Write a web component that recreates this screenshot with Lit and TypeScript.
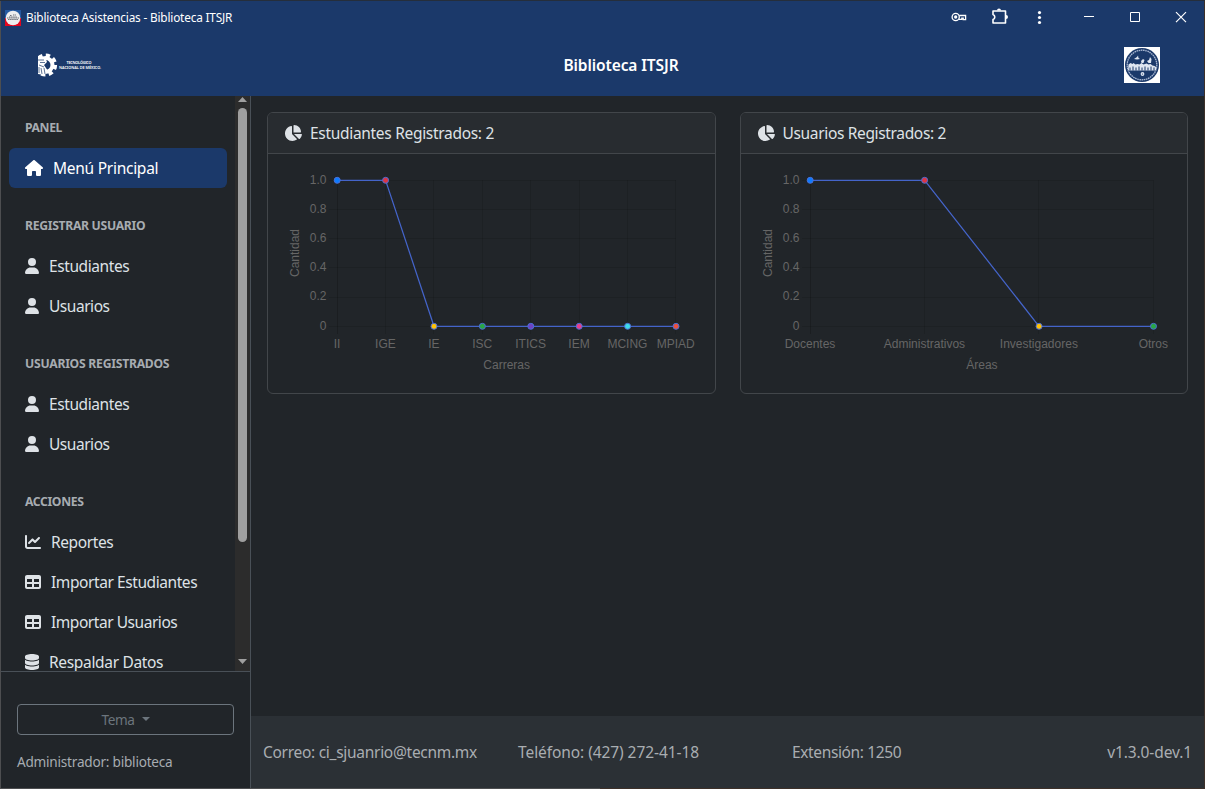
import { LitElement, html, css, svg } from "lit";
import { customElement, property } from "lit/decorators.js";

const ICONS: Record<string, { w: number; d: string }> = {
  house: { w: 576, d: "M575.8 255.5c0 18-15 32.1-32 32.1h-32l.7 160.2c0 2.7-.2 5.4-.5 8.1V472c0 22.1-17.9 40-40 40H456c-1.1 0-2.2 0-3.3-.1c-1.4 .1-2.8 .1-4.2 .1H416 392c-22.1 0-40-17.9-40-40V448 384c0-17.7-14.3-32-32-32H256c-17.7 0-32 14.3-32 32v64 24c0 22.1-17.9 40-40 40H160 128.1c-1.5 0-3-.1-4.5-.2c-1.2 .1-2.4 .2-3.6 .2H104c-22.1 0-40-17.9-40-40V360c0-.9 0-1.9 .1-2.8V287.6H32c-18 0-32-14-32-32.1c0-9 3-17 10-24L266.4 8c7-7 15-8 22-8s15 2 21 7L564.8 231.5c8 7 12 15 11 24z" },
  user: { w: 448, d: "M224 256A128 128 0 1 0 224 0a128 128 0 1 0 0 256zm-45.7 48C79.8 304 0 383.8 0 482.3C0 498.7 13.3 512 29.7 512H418.3c16.4 0 29.7-13.3 29.7-29.7C448 383.8 368.2 304 269.7 304H178.3z" },
  line: { w: 512, d: "M64 64c0-17.7-14.3-32-32-32S0 46.3 0 64V400c0 44.2 35.8 80 80 80H480c17.7 0 32-14.3 32-32s-14.3-32-32-32H80c-8.8 0-16-7.2-16-16V64zm406.6 86.6c12.5-12.5 12.5-32.8 0-45.3s-32.8-12.5-45.3 0L320 210.7l-57.4-57.4c-12.5-12.5-32.8-12.5-45.3 0l-112 112c-12.5 12.5-12.5 32.8 0 45.3s32.8 12.5 45.3 0L240 221.3l57.4 57.4c12.5 12.5 32.8 12.5 45.3 0l128-128z" },
  table: { w: 512, d: "M64 256V160H224v96H64zm0 64H224v96H64V320zm224 96V320H448v96H288zM448 256H288V160H448v96zM64 32C28.7 32 0 60.7 0 96V416c0 35.3 28.7 64 64 64H448c35.3 0 64-28.7 64-64V96c0-35.3-28.7-64-64-64H64z" },
  database: { w: 448, d: "M448 80v48c0 44.2-100.3 80-224 80S0 172.2 0 128V80C0 35.8 100.3 0 224 0S448 35.8 448 80zM393.2 214.7c20.8-7.4 39.9-16.9 54.8-28.6V288c0 44.2-100.3 80-224 80S0 332.2 0 288V186.1c14.9 11.8 34 21.2 54.8 28.6C99.7 230.7 159.5 240 224 240s124.3-9.3 169.2-25.3zM0 346.1c14.9 11.8 34 21.2 54.8 28.6C99.7 390.7 159.5 400 224 400s124.3-9.3 169.2-25.3c20.8-7.4 39.9-16.9 54.8-28.6V432c0 44.2-100.3 80-224 80S0 476.2 0 432V346.1z" },
  pie: { w: 576, d: "M304 240V16.6c0-9 7-16.6 16-16.6C443.7 0 544 100.3 544 224c0 9-7.6 16-16.6 16H304zM32 272C32 150.7 122.1 50.3 239 34.3c9.2-1.3 17 6.1 17 15.4V288L412.5 444.5c6.7 6.7 6.2 17.7-1.5 23.1C371.8 495.6 323.8 512 272 512C139.5 512 32 404.6 32 272zm526.4 16c9.3 0 16.6 7.8 15.4 17c-7.7 55.9-34.6 105.6-73.9 142.3c-6 5.6-15.4 5.2-21.2-.7L320 288H558.4z" },
};

const icon = (name: string) => {
  const { w, d } = ICONS[name];
  return html`<svg width=${w / 32} height="16" viewBox="0 0 ${w} 512" fill="currentColor"><path d=${d}></path></svg>`;
};

/* Label whose letters are spaced so that the text fills the given width in px. */
@customElement("fit-label")
class FitLabel extends LitElement {
  static styles = css`
    :host { display: inline-block; white-space: nowrap; }
  `;
  @property() text = "";
  @property({ type: Number }) width = 0;
  render() {
    return html`<span>${this.text}</span>`;
  }
  updated() {
    const span = this.renderRoot.querySelector("span") as HTMLElement;
    span.style.letterSpacing = "0px";
    const natural = span.getBoundingClientRect().width;
    span.style.letterSpacing = `${((this.width - natural) / this.text.length).toFixed(3)}px`;
  }
}

@customElement("line-chart")
class LineChart extends LitElement {
  static styles = css`
    :host { display: block; }
    svg { display: block; }
    text { font: 12px "Liberation Sans", Arial, sans-serif; fill: #666; }
    .grid { stroke: #000; stroke-opacity: 0.1; }
    .zero { stroke: #000; stroke-opacity: 0.18; }
    .series { fill: none; stroke: #4464c9; stroke-width: 1.25; }
    .dot { stroke: #4b6fd6; stroke-width: 1; }
  `;
  @property({ attribute: false }) labels: string[] = [];
  @property({ attribute: false }) values: number[] = [];
  @property({ attribute: false }) colors: string[] = [];
  @property({ type: Number }) end = 408;
  @property() axis = "";
  render() {
    const x0 = 69;
    const y1 = 26;
    const h = 146;
    const n = this.labels.length - 1;
    const x = (i: number) => x0 + ((this.end - x0) * i) / n;
    const y = (v: number) => y1 + h * (1 - v) + 0.3;
    const snap = (v: number) => Math.floor(v) + 0.5;
    const ticks = ["0", "0.2", "0.4", "0.6", "0.8", "1.0"];
    return html`<svg width="446" height="239" viewBox="0 0 446 239">
      ${ticks.map((t) => svg`
        <line class="grid" x1=${x0 - 8} x2=${this.end} y1=${snap(y(+t))} y2=${snap(y(+t))}></line>
        <text x=${x0 - 10.5} y=${Math.floor(y(+t) - 0.25) + 4} text-anchor="end">${t}</text>`)}
      ${this.labels.map((l, i) => svg`
        <line class=${i ? "grid" : "zero"} x1=${snap(x(i))} x2=${snap(x(i))} y1=${y1} y2=${y1 + h + 8}></line>
        <text x=${x(i)} y="194" text-anchor="middle">${l}</text>`)}
      <polyline class="series" points=${this.values.map((v, i) => `${x(i) + 0.2},${y(v)}`).join(" ")}></polyline>
      ${this.values.map((v, i) => svg`<circle class="dot" cx=${x(i) + 0.2} cy=${y(v)} r="3" fill=${this.colors[i]}></circle>`)}
      <text x=${(x0 + this.end) / 2 + 0.3} y="215" text-anchor="middle">${this.axis}</text>
      <text transform="translate(31 99) rotate(-90)" text-anchor="middle">Cantidad</text>
    </svg>`;
  }
}

interface Entry { icon: string; text: string; width: number; active?: boolean }
const MENU: { title: string; width: number; items: Entry[] }[] = [
  { title: "PANEL", width: 37, items: [{ icon: "house", text: "Menú Principal", width: 105.3, active: true }] },
  { title: "REGISTRAR USUARIO", width: 120.3, items: [
    { icon: "user", text: "Estudiantes", width: 80.3 },
    { icon: "user", text: "Usuarios", width: 60.5 } ] },
  { title: "USUARIOS REGISTRADOS", width: 144.3, items: [
    { icon: "user", text: "Estudiantes", width: 80.3 },
    { icon: "user", text: "Usuarios", width: 60.5 } ] },
  { title: "ACCIONES", width: 58.5, items: [
    { icon: "line", text: "Reportes", width: 62.3 },
    { icon: "table", text: "Importar Estudiantes", width: 146.2 },
    { icon: "table", text: "Importar Usuarios", width: 126.3 },
    { icon: "database", text: "Respaldar Datos", width: 114.2 } ] },
];

const COLORS = ["#0d7bff", "#dc3545", "#ffc107", "#28a745", "#6f42c1", "#e83e8c", "#3ddbe8", "#e9503f"];

@customElement("app-root")
class AppRoot extends LitElement {
  static styles = css`
    :host {
      display: block;
      font-family: "Noto Sans", "Open Sans", sans-serif;
      font-size: 15.5px;
      color: #dee2e6;
    }
    * { box-sizing: border-box; }
    svg { display: block; flex: none; }
    .window {
      width: 1205px;
      height: 789px;
      display: grid;
      grid-template-rows: 95px 1fr;
      padding: 1px;
      overflow: hidden;
      background: linear-gradient(#252e3b 0 1px, transparent 1px),
        linear-gradient(90deg, #4d4e50 0 600px, #3d3029 600px);
    }
    .top { background: #1b396a; color: #fff; display: grid; grid-template-rows: 33px 62px; }
    .titlebar { display: flex; align-items: center; font-size: 11.8px; padding-left: 4px; }
    .titlebar fit-label { margin-left: 5px; margin-top: -2px; flex: 1; }
    .controls { display: flex; align-items: center; }
    .brand { display: grid; grid-template-columns: 100px 1fr 80px; align-items: center; }
    .brand .logo { margin-left: 36px; margin-top: -1px; }
    .brand .name { text-align: center; font-weight: 600; padding-left: 17px; margin-top: -1px; }
    .brand .seal { margin-top: -1px; }
    .body { display: grid; grid-template-columns: 250px 1fr; background: #212529; min-height: 0; }
    .side { display: grid; grid-template-rows: 575px 1fr; border-right: 1px solid #495057; min-height: 0; }
    .scroller { display: grid; grid-template-columns: 234px 15px; overflow: hidden; }
    .menu { padding: 0 8px; overflow: hidden; }
    .heading {
      height: 58px; padding: 28px 16px 0; line-height: 20px;
      font-size: 12.2px; font-weight: 700; color: #a7acb1;
    }
    .heading.first { height: 52px; padding-top: 22px; }
    .entry { display: flex; align-items: center; height: 40px; padding-left: 16px; gap: 10px; border-radius: 6px; white-space: nowrap; }
    .entry.active { background: #1b396a; color: #fff; }
    .entry fit-label { line-height: 24px; margin-top: -1px; }
    .track { background: #2c2c2c; display: flex; flex-direction: column; align-items: center; padding-top: 1px; }
    .thumb { width: 9px; height: 434px; margin-top: 6px; border-radius: 5px; background: #9f9f9f; }
    .track .down { margin-top: auto; margin-bottom: 7px; }
    .account { border-top: 1px solid #495057; padding: 32px 16px 0; font-size: 13.6px; color: #a7acb1; }
    .theme {
      display: flex; align-items: center; justify-content: center; gap: 7px;
      height: 31px; border: 1px solid #6c757d; border-radius: 4px; color: #6c757d;
    }
    .caret { border: 4px solid transparent; border-top-color: #6c757d; border-bottom: 0; margin-bottom: 2px; }
    .who { margin-top: 16px; line-height: 21px; }
    .main { display: grid; grid-template-rows: 1fr 72px; min-width: 0; }
    .cards { display: grid; grid-template-columns: 1fr 1fr; gap: 24px; padding: 16px; align-items: start; }
    .card { height: 282px; border: 1px solid #42464a; border-radius: 6px; overflow: hidden; min-width: 0; }
    .card header {
      height: 41px; display: flex; align-items: center; gap: 8px; padding-left: 16px;
      background: #282c30; border-bottom: 1px solid #42464a;
    }
    .foot {
      display: grid; grid-template-columns: 255px 274px 1fr auto; align-items: center;
      padding: 0 12px; background: #2b3035; color: #a9adb1;
    }
  `;

  render() {
    return html`<div class="window">
      <div class="top">
        <div class="titlebar">
          <svg width="16" height="16" viewBox="0 0 16 16">
            <rect width="16" height="8" fill="#2559a0"></rect><rect y="8" width="16" height="8" fill="#e3061f"></rect>
            <circle cx="8" cy="8" r="7.3" fill="#eee"></circle>
            <path d="M2 8h12M3 9.5h10M5 5.5h2M8 5h3M4 7h8" stroke="#6c6f78" stroke-width="1" stroke-dasharray="1.5 .6"></path>
          </svg>
          <fit-label text="Biblioteca Asistencias - Biblioteca ITSJR" width="206.2"></fit-label>
          <svg class="controls" width="255" height="33" viewBox="949 1 255 33" fill="none" stroke="#fff">
            <g stroke-width="1.3">
              <circle cx="955.7" cy="17" r="3.6"></circle><circle cx="955.7" cy="17" r="1" fill="#fff"></circle>
              <path d="M959.2 15.5h6.4v4.2h-2.4v-1.6h-1.4v1.2h-2.8"></path>
            </g>
            <path d="M993 11h12.500v12h-12.500v-3.400c2.400-.8 2.400-4.400 0-5.200z" stroke-width="1.600" stroke-linejoin="round"></path>
            <path d="M997 10.500a2 2 0 0 1 4 0zM1006 15a2 2 0 0 1 0 4z" fill="#fff" stroke="none"></path>
            <g fill="#fff" stroke="none"><circle cx="1039.500" cy="12.600" r="1.600"></circle><circle cx="1039.500" cy="17.500" r="1.600"></circle><circle cx="1039.500" cy="22.500" r="1.600"></circle></g>
            <path d="M1084 16.500h10M1130.500 12.500h9v9h-9z"></path>
            <path d="M1176 12.200l10 10M1186 12.200l-10 10" stroke-width="1.200"></path>
          </svg>
        </div>
        <div class="brand">
          <svg class="logo" width="66" height="26" viewBox="0 0 66 26">
            <circle cx="8.500" cy="13" r="9.800" fill="none" stroke="#fff" stroke-width="3.600" stroke-dasharray="4.300 3.397"></circle>
            <circle cx="8.500" cy="13" r="7" fill="none" stroke="#fff" stroke-width="4"></circle>
            <path d="M-3 0h4v26h-4z" fill="#1b396a"></path>
            <path d="M1 4l7 1 2 5-3 3 4 6-4 4-6-1z" fill="#fff"></path>
            <path d="M1 8h6M3 10.500h5M2 13l5 2M4 16l1 6M7 16l1 6M2 15v6" stroke="#1b396a" stroke-width=".7"></path>
            <text x="29.500" y="12" font-size="3.800" font-weight="600" fill="#fff" textLength="25">TECNOLÓGICO</text>
            <text x="22" y="16.800" font-size="3.800" font-weight="600" fill="#fff" textLength="42">NACIONAL DE MÉXICO.</text>
          </svg>
          <div class="name"><fit-label text="Biblioteca ITSJR" width="115"></fit-label></div>
          <svg class="seal" width="36" height="36" viewBox="0 0 36 36">
            <rect width="36" height="36" fill="#fff"></rect>
            <circle cx="18" cy="18" r="17" fill="#1b396a"></circle>
            <circle cx="18" cy="18" r="14.800" fill="none" stroke="#a9b8d3" stroke-width="1.300" stroke-dasharray="1.600 .6"></circle>
            <path d="M4 18h28v6H4z" fill="#1b396a"></path>
            <path d="M4.500 17.500l2-1.500 2 1 1-1 2 1.500 2-.5 2 .5 2-1.500 2 1.500 3-1 2 1 2-.5 2 1.500 2 .5 1.500 1v3.500h-28z" fill="#dfe6f1"></path>
            <path d="M6 20.500v3M9 19.500v4M12 20.500v3M15 19.500v4M18 20.500v3M21 19.500v4M24 20.500v3M27 19.500v4M30 20.500v3" stroke="#1b396a" stroke-width="1"></path>
            <path d="M10 12l3-2 1-1.500.5 2.500 1.500 1-3 .5zM17 14l2-2 1.500 1-1 3h-2zM23 14l2-1 1-3 1.500 2-.5 4h-2.500z" fill="#dfe6f1"></path>
            <circle cx="18.500" cy="27" r="1.900" fill="#dce3ef"></circle><circle cx="18.500" cy="27" r=".6" fill="#1b396a"></circle>
          </svg>
        </div>
      </div>
      <div class="body">
        <div class="side">
          <div class="scroller">
            <nav class="menu">
              ${MENU.map((g, i) => html`
                <div class="heading ${i ? "" : "first"}"><fit-label text=${g.title} width=${g.width}></fit-label></div>
                ${g.items.map((e) => html`<div class="entry ${e.active ? "active" : ""}">
                  ${icon(e.icon)}<fit-label text=${e.text} width=${e.width}></fit-label></div>`)}`)}
            </nav>
            <div class="track">
              <svg width="9" height="5" viewBox="0 0 9 5"><path d="M4.500 0L9 5H0z" fill="#9f9f9f"></path></svg>
              <div class="thumb"></div>
              <svg class="down" width="9" height="5" viewBox="0 0 9 5"><path d="M4.500 5L9 0H0z" fill="#9f9f9f"></path></svg>
            </div>
          </div>
          <div class="account">
            <div class="theme"><fit-label text="Tema" width="33"></fit-label><span class="caret"></span></div>
            <div class="who"><fit-label text="Administrador: biblioteca" width="155.500"></fit-label></div>
          </div>
        </div>
        <div class="main">
          <div class="cards">
            <section class="card">
              <header>${icon("pie")}<fit-label text="Estudiantes Registrados: 2" width="184"></fit-label></header>
              <line-chart axis="Carreras" .labels=${["II", "IGE", "IE", "ISC", "ITICS", "IEM", "MCING", "MPIAD"]}
                .values=${[1, 1, 0, 0, 0, 0, 0, 0]} .colors=${COLORS} end="407.800"></line-chart>
            </section>
            <section class="card">
              <header>${icon("pie")}<fit-label text="Usuarios Registrados: 2" width="163.500"></fit-label></header>
              <line-chart axis="Áreas" .labels=${["Docentes", "Administrativos", "Investigadores", "Otros"]}
                .values=${[1, 1, 0, 0]} .colors=${COLORS} end="412.300"></line-chart>
            </section>
          </div>
          <div class="foot">
            <fit-label text="Correo: ci_sjuanrio@tecnm.mx" width="214"></fit-label>
            <fit-label text="Teléfono: (427) 272-41-18" width="181"></fit-label>
            <fit-label text="Extensión: 1250" width="109.300"></fit-label>
            <fit-label text="v1.3.0-dev.1" width="84.800"></fit-label>
          </div>
        </div>
      </div>
    </div>`;
  }
}
